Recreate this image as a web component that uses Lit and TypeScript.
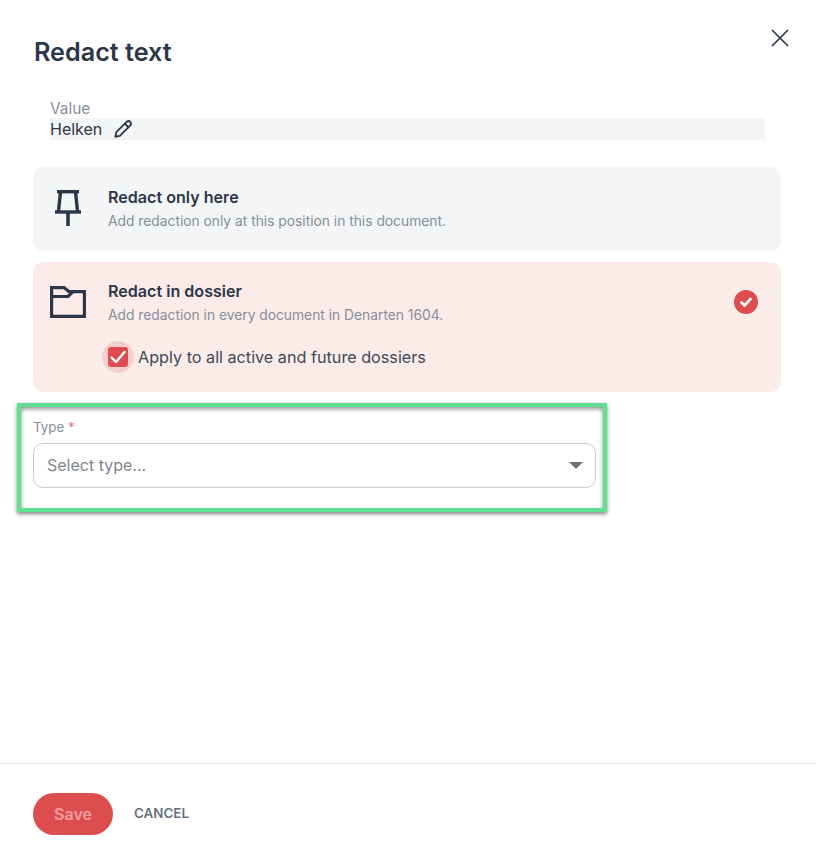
import { LitElement, html, css } from "lit";
import { customElement } from "lit/decorators.js";

@customElement("app-root")
export class AppRoot extends LitElement {
  static styles = css`
    :host { display: block; height: 858px; position: relative; background: #fff; overflow: hidden;
      font-family: Inter, "Liberation Sans", sans-serif; color: #2b3648; }
    * { box-sizing: border-box; }
    .page { height: 858px; display: flex; flex-direction: column; }
    .body { flex: 1; padding: 37px 35px 0 33px; display: flex; flex-direction: column; position: relative; }
    h1 { margin: 0; padding-left: 1px; font-size: 25.2px; line-height: 30px; font-weight: 600; color: #2b3648; }
    .close { position: absolute; left: 770px; top: 28px; width: 20px; height: 20px; display: block; }
    .value { margin: 33px 16px 0 17px; }
    .value-label { font-size: 15.4px; line-height: 18px; color: #868e9b; height: 18px; }
    .value-row { height: 22px; background: #f4f5f7; display: flex; align-items: center; gap: 12px;
      font-size: 16px; color: #2b3648; }
    .value-row svg { width: 19px; height: 19px; display: block; }
    .option { border-radius: 10px; background: #f4f5f7; display: grid; grid-template-columns: 75px 1fr 48px; }
    .option.first { margin-top: 27px; height: 84px; padding-top: 21px; }
    .option.active { margin-top: 11px; height: 130px; background: #fbecea; padding-top: 20px; }
    .ico { display: flex; justify-content: center; padding-right: 5px; }
    .ico svg { display: block; }
    .first .ico svg { width: 26px; height: 36px; margin-top: 2px; }
    .active .ico svg { width: 36px; height: 32px; margin-top: 4px; }
    .opt-title { font-size: 16.1px; line-height: 18px; font-weight: 600; color: #2b3648; }
    .opt-desc { font-size: 13.8px; line-height: 16px; margin-top: 7px; color: #868e9b; }
    .tick { width: 24px; height: 24px; display: block; margin: 8px 0 0 1px; }
    .apply { display: flex; align-items: center; gap: 6px; margin-top: 18px; margin-left: -6px; font-size: 16.2px; color: #3f4856; }
    .apply .halo { width: 32px; height: 32px; border-radius: 50%; background: #f5cfce; display: flex; align-items: center; justify-content: center; margin-right: -2px; }
    .box { width: 20px; height: 20px; border-radius: 3px; background: #dd4d50; display: block; }
    .type { margin-top: 28px; width: 563px; position: relative; }
    .type-label { font-size: 13.4px; line-height: 14px; color: #868e9b; }
    .type-label span { color: #e5787a; }
    .select { margin-top: 9px; height: 45px; border: 1px solid #cbc9ce; border-radius: 10px; display: flex; align-items: center;
      justify-content: space-between; padding: 0 12px 2px 13px; font-size: 16px; color: #80858d; }
    .caret { width: 0; height: 0; border-left: 7px solid transparent; border-right: 7px solid transparent; border-top: 7px solid #707070; margin-top: 2px; }
    .hl { position: absolute; left: 17px; top: 403px; width: 590px; height: 109px; border: 4px solid #5ee292;
      box-shadow: 0 2px 4px rgba(0,0,0,.5), inset 0 2px 4px rgba(0,0,0,.45); pointer-events: none; }
    footer { height: 95px; border-top: 1px solid #e4e4e6; padding: 29px 33px 0; display: flex; align-items: flex-start; gap: 21px; flex: none; }
    .save { width: 80px; height: 42px; border-radius: 21px; background: #dd4d50; color: #f39ca0; display: flex; align-items: center;
      justify-content: center; font-size: 16px; font-weight: 600; }
    .cancel { font-size: 13.4px; font-weight: 600; color: #687180; line-height: 40px; }
  `;

  render() {
    return html`
      <div class="page">
        <div class="body">
          <h1>Redact text</h1>
          <div class="value">
            <div class="value-label">Value</div>
            <div class="value-row">
              <span>Helken</span>
              <svg viewBox="2 2 21 21" fill="none" stroke="#2b3648" stroke-width="2" stroke-linejoin="round" stroke-linecap="round">
                <path d="M3.5 20.5l1-5L16 4c1.2-1.2 3-1.2 4 0s1.2 2.8 0 4L8.5 19.5z"/>
                <path d="M14 6l4 4"/>
              </svg>
            </div>
          </div>

          <div class="option first">
            <div class="ico">
              <svg viewBox="0 0 26 36" fill="none" stroke="#2b3648" stroke-width="3.4">
                <path d="M2 1.7h22"/>
                <path d="M5.5 1.7L3.5 21M20.5 1.7L22.5 21"/>
                <path d="M0 22h26"/>
                <path d="M13 22v14" stroke-width="3.6"/>
              </svg>
            </div>
            <div>
              <div class="opt-title">Redact only here</div>
              <div class="opt-desc">Add redaction only at this position in this document.</div>
            </div>
          </div>

          <div class="option active">
            <div class="ico">
              <svg viewBox="0 0 36 32" fill="none" stroke="#2b3648" stroke-width="3.2" stroke-linejoin="miter">
                <path d="M1.6 1.6H14l5 4H34.4V30.4H1.6Z"/>
                <path d="M1.6 10.5H18l5-5"/>
              </svg>
            </div>
            <div>
              <div class="opt-title">Redact in dossier</div>
              <div class="opt-desc">Add redaction in every document in Denarten 1604.</div>
              <div class="apply">
                <span class="halo">
                  <svg class="box" viewBox="0 0 20 20" fill="none" stroke="#fff" stroke-width="2.4" stroke-linecap="round" stroke-linejoin="round">
                    <path d="M3.5 10.5l4.5 4.5L16.5 5"/>
                  </svg>
                </span>
                <span>Apply to all active and future dossiers</span>
              </div>
            </div>
            <svg class="tick" viewBox="0 0 24 24">
              <circle cx="12" cy="12" r="12" fill="#dd4d50"/>
              <path d="M7.5 12.5l3 3 6-6.5" fill="none" stroke="#fff" stroke-width="2.6" stroke-linecap="round" stroke-linejoin="round"/>
            </svg>
          </div>

          <div class="type">
            <div class="type-label">Type <span>*</span></div>
            <div class="select">
              <span>Select type...</span>
              <span class="caret"></span>
            </div>
          </div>
        </div>
        <footer>
          <div class="save">Save</div>
          <div class="cancel">CANCEL</div>
        </footer>
      </div>
      <svg class="close" viewBox="0 0 20 20" fill="none" stroke="#2b3648" stroke-width="1.7">
        <path d="M2 2l16 16M18 2L2 18"/>
      </svg>
      <div class="hl"></div>
    `;
  }
}
